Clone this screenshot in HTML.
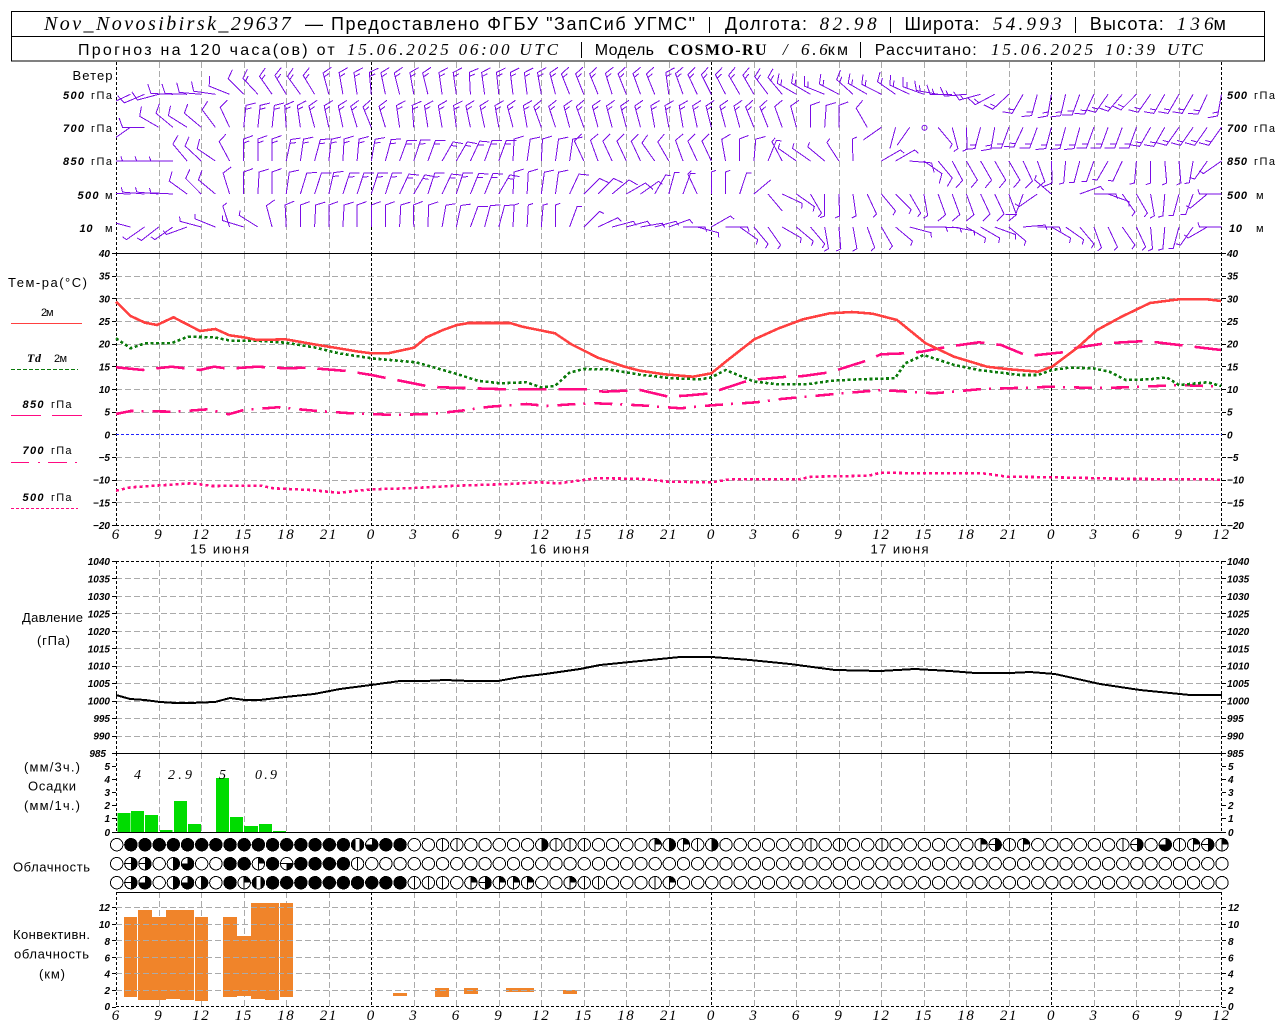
<!DOCTYPE html>
<html lang="ru"><head><meta charset="utf-8"><title>Nov_Novosibirsk_29637</title>
<style>
html,body{margin:0;padding:0;background:#fff}
svg{display:block}
text{fill:#000;font-family:"Liberation Sans",sans-serif}
.s{font-family:"Liberation Serif",serif;font-style:italic}
.h1{font-size:18px}.h2{font-size:16px}
.v1{font-size:19px;font-family:"Liberation Serif",serif;font-style:italic}
.v2{font-size:17px;font-family:"Liberation Serif",serif;font-style:italic}
.l{font-size:13px}
.a{font-size:10px;font-style:italic;font-weight:700}
.w{font-size:11px}
.wi{font-size:11px;font-style:italic;font-weight:700}
.t{font-size:15px;font-family:"Liberation Serif",serif;font-style:italic;text-anchor:middle;letter-spacing:1.5px}
.e{text-anchor:end}
.c{fill:none;stroke-linejoin:round}
</style></head><body>
<svg xmlns="http://www.w3.org/2000/svg" width="1280" height="1024" viewBox="0 0 1280 1024">
<rect width="1280" height="1024" fill="#fff"/>
<defs><clipPath id="cw"><rect x="116" y="62" width="1107" height="191"/></clipPath></defs>

<!-- header -->
<g shape-rendering="crispEdges" fill="none" stroke="#000">
<rect x="11.5" y="11.5" width="1253" height="49.5"/>
<path d="M11.5 36.5H1264.5"/>
<path d="M709.5 17V33M890.5 17V33M1075.5 17V33M581.5 42V58M860.5 42V58"/>
</g>
<text x="44" y="30" class="s" font-size="20" textLength="246.6">Nov_Novosibirsk_29637</text>
<text x="305" y="30" class="h1" textLength="390">— Предоставлено ФГБУ "ЗапСиб УГМС"</text>
<text x="725" y="30" class="h1" textLength="82">Долгота:</text>
<text x="819.6" y="30" class="v1" textLength="57">82.98</text>
<text x="904.5" y="30" class="h1" textLength="75">Широта:</text>
<text x="993" y="30" class="v1" textLength="68.6">54.993</text>
<text x="1089.8" y="30" class="h1" textLength="74">Высота:</text>
<text x="1176.7" y="30" class="v1" textLength="36.8">136</text>
<text x="1213.5" y="30" class="h1" textLength="12.5">м</text>

<text x="78" y="55" class="h2" textLength="256.7">Прогноз на 120 часа(ов) от</text>
<text x="347" y="55" class="v2" textLength="211">15.06.2025 06:00 UTC</text>
<text x="594.7" y="55" class="h2" textLength="59.3">Модель</text>
<text x="667.8" y="55" font-size="16" font-weight="700" style="font-family:'Liberation Serif',serif" textLength="98.7">COSMO-RU</text>
<text x="782.9" y="55" class="v2">/</text>
<text x="801" y="55" class="v2" textLength="26.8">6.6</text>
<text x="827.8" y="55" class="h2" textLength="20.2">км</text>
<text x="874.7" y="55" class="h2" textLength="102">Рассчитано:</text>
<text x="991" y="55" class="v2" textLength="102">15.06.2025</text>
<text x="1105" y="55" class="v2" textLength="50">10:39</text>
<text x="1167" y="55" class="v2" textLength="36">UTC</text>

<!-- grid -->
<g shape-rendering="crispEdges" fill="none">
<path id="gv" stroke="#aaa" stroke-dasharray="6 3"/>
<path id="ax" stroke="#000" stroke-dasharray="3 2"/>
<path id="tk" stroke="#000"/>
<path d="M116 253.5H1222M116 753.5H1222M116 832.5H1222M116 892.5H1222" stroke="#000"/>
<path d="M116 434.5H1222" stroke="#2222ff" stroke-dasharray="3 2"/>
<path id="bk" stroke="#000" stroke-dasharray="3 2"/>
</g>

<!-- wind barbs -->
<g clip-path="url(#cw)"><path id="wb" fill="none" stroke="#7a0ce6" stroke-width="1" shape-rendering="crispEdges"/>
<circle cx="924.5" cy="127.7" r="2.5" fill="none" stroke="#7a0ce6"/></g>

<!-- temp curves -->
<g class="c" shape-rendering="crispEdges">
<polyline class="c" stroke="#ff0a82" stroke-width="2.6" stroke-dasharray="3 3" points="116,490.7 130.6,487.3 191.8,483.3 212,486 261,485.7 273.5,488.3 310,490 338.8,492.7 371.4,489.3 408,488.3 457,485.7 510,484 538.8,482.3 559,483.3 596,478.3 640,478.7 668.6,481.7 711.4,482.3 729.8,479.3 799,479.3 811.4,476.7 868.6,475.7 880.8,472.7 917.6,473.3 982.8,473.3 1007.3,476.7 1052,477.3 1133.9,479 1211,479.3 1221,480"/>
<polyline class="c" stroke="#ff0a82" stroke-width="2.6" stroke-dasharray="18 8 2 9" points="116,414 130.6,411 175.5,411.7 208,409.3 228.6,414.3 243.7,410 277.6,407.3 314,410.7 351,413.3 387.8,414.7 428.6,414.3 461,410.7 490,406.7 526.5,404 547,406 571.4,404.3 596,403.3 640,405.3 680.8,408.3 711.4,405.3 756.3,402.3 780.8,399 831.8,394.3 880.8,390 934,393.3 978.8,389.3 1052,386.7 1093,388 1129.8,387.3 1179,385 1221,386.7"/>
<polyline class="c" stroke="#ff0a82" stroke-width="2.6" stroke-dasharray="28.5 12" points="116,367.3 142.9,370 171.4,366.7 200,370 214,366.7 228.6,368.7 257,366.7 285.7,368.3 306,367.7 347,371 371.4,375 387.8,378.3 426.5,386 440.8,387.3 506,389.3 587.8,389.3 604,391.7 640,390 668.6,396.7 685,395.7 711.4,393.3 721.6,389.3 750,380 787,376.7 803.3,376 829.8,372.3 868.6,360 880.8,354.3 905.3,353.3 921.6,351.7 948,346.7 978.8,342.3 1001,345 1027.8,356 1068.6,351.7 1076.7,347.7 1105.3,343.3 1146,341 1170.6,344 1221,350"/>
<polyline class="c" stroke="#0b7a0b" stroke-width="2.6" stroke-dasharray="3 2.5" points="116,338.3 130.6,348.3 145,343.3 171.4,343.3 187.8,336.7 214,337.3 230.6,340.7 257,340.7 285.7,342.7 314,347.3 338.8,353.3 371.4,358.3 416,362.3 457,374 477.6,380.7 500,383.3 526.5,382.3 540.8,387.3 555,386 569.4,372.7 583.7,369 608,369.3 640,374.7 672.7,378.3 701,379.3 711.4,377.3 725.7,370 754.3,381.7 778.8,384.3 807.3,384.3 831.8,380.7 860.4,379.3 895,378.3 905.3,363.3 923.7,355 954.3,365 978.8,370 1019.6,375 1038,375 1052,370 1068.6,367.7 1093,368.3 1109.4,371.7 1125.7,380 1150,379.3 1166.5,377.3 1179,385 1207.3,382.3 1221,386"/>
<polyline class="c" stroke="#ff4040" stroke-width="2.6" points="116,301.7 130.6,316 145,322.7 157,325 173.5,317.3 200,331 215.5,329 229.4,335.3 243.7,337.3 257,340 285.7,339.3 314,344.3 341,348.7 359,351.7 371.4,353.3 388,353.3 414,347.7 426.5,337.3 443,330 457,325 469,323 510,323 522.4,326.7 555,333.3 571.4,344.3 598,357.7 624.5,366.7 640,370.7 664.5,374.3 693,376.7 711.4,373.3 727.8,360 754.3,339.3 778.8,328.3 803,319.3 829.8,313.3 852,312 872.7,313.7 897,320 925.7,343.3 954,356.7 987,366.7 1009.4,369.3 1038,371.7 1052,366.7 1076.7,348.3 1097,330 1121.6,316.7 1150,303 1179,299.3 1207,299.3 1221,301"/>
<!-- legend lines -->
<path d="M11 323.5H82" stroke="#ff4040"/>
<path d="M11 369.5H78" stroke="#0b7a0b" stroke-dasharray="4 2"/>
<path d="M11 415.5H41M52 415.5H82" stroke="#ff0a82"/>
<path d="M11 462.5H29M38 462.5H40M48 462.5H67M75 462.5H77" stroke="#ff0a82"/>
<path d="M11 508.5H78" stroke="#ff0a82" stroke-dasharray="3 2"/>
<!-- pressure -->
<polyline class="c" stroke="#000" stroke-width="2" points="116,695 130,699 145,700 160,702 175,703 190,703 215,702 230,698 245,700 260,700 285,697 314,694 340,689 371,685 400,681 425,681 445,680 470,681 498,681 520,677 545,674 580,669 600,665 640,661 680,657 712,657 750,660 790,664 835,670 880,671 915,669 950,671 975,673 1010,673 1030,672 1055,674 1100,684 1140,690 1190,695 1222,695"/>
</g>

<!-- precip bars -->
<g fill="#00dc00" shape-rendering="crispEdges">
<rect x="117.3" y="813" width="13" height="19"/><rect x="131" y="811" width="13" height="21"/><rect x="145" y="815" width="13" height="17"/><rect x="160" y="830" width="12.5" height="2"/><rect x="174" y="801" width="13" height="31"/><rect x="188" y="824" width="13" height="8"/><rect x="216" y="778" width="13" height="54"/><rect x="230" y="817" width="13" height="15"/><rect x="244" y="826" width="14" height="6"/><rect x="259" y="824" width="13" height="8"/><rect x="273" y="831" width="13" height="1"/>
</g>

<!-- clouds -->
<g id="cl" shape-rendering="crispEdges"></g>

<!-- convective bars -->
<g fill="#f0842a" shape-rendering="crispEdges">
<rect x="124" y="917" width="13" height="80"/><rect x="138" y="910" width="14" height="90"/><rect x="152" y="917" width="14" height="83"/><rect x="166" y="910" width="14" height="89"/><rect x="180" y="910" width="14" height="90"/><rect x="195" y="917" width="13" height="84"/><rect x="223" y="917" width="14" height="80"/><rect x="237" y="936" width="14" height="60"/><rect x="251" y="903" width="14" height="96"/><rect x="265" y="903" width="14" height="97"/><rect x="280" y="903" width="13" height="94"/><rect x="393" y="993" width="14" height="3"/><rect x="435" y="988" width="14" height="9"/><rect x="464" y="988" width="14" height="6"/><rect x="506" y="988" width="28" height="4"/><rect x="563" y="990" width="14" height="4"/>
</g>
<path id="gh" fill="none" stroke="#aaa" stroke-dasharray="6 3" shape-rendering="crispEdges"/>

<!-- wind labels left -->
<text x="72.5" y="80" class="l" textLength="40">Ветер</text>
<text x="63" y="99" class="wi" textLength="21">500</text><text x="91" y="99" class="w" textLength="21">гПа</text>
<text x="63" y="132" class="wi" textLength="21">700</text><text x="91" y="132" class="w" textLength="21">гПа</text>
<text x="63" y="165" class="wi" textLength="21">850</text><text x="91" y="165" class="w" textLength="21">гПа</text>
<text x="77.5" y="199" class="wi" textLength="21">500</text><text x="105" y="199" class="w">м</text>
<text x="79.5" y="232" class="wi" textLength="13">10</text><text x="105" y="232" class="w">м</text>
<!-- wind labels right -->
<text x="1227" y="99" class="wi" textLength="20">500</text><text x="1254" y="99" class="w" textLength="21">гПа</text>
<text x="1227" y="132" class="wi" textLength="20">700</text><text x="1254" y="132" class="w" textLength="21">гПа</text>
<text x="1227" y="165" class="wi" textLength="20">850</text><text x="1254" y="165" class="w" textLength="21">гПа</text>
<text x="1227" y="199" class="wi" textLength="20">500</text><text x="1256" y="199" class="w">м</text>
<text x="1229" y="232" class="wi" textLength="13">10</text><text x="1256" y="232" class="w">м</text>

<!-- temp legend -->
<text x="8" y="287" class="l" textLength="79">Тем-ра(°С)</text>
<text x="41" y="316" class="w" textLength="12.5">2м</text>
<text x="27" y="362" font-size="12" font-weight="700" style="font-family:'Liberation Serif',serif;font-style:italic" textLength="14">Td</text>
<text x="54" y="362" class="w" textLength="13">2м</text>
<text x="22.5" y="408" class="wi" textLength="21">850</text><text x="51" y="408" class="w" textLength="20.5">гПа</text>
<text x="22.5" y="454" class="wi" textLength="21">700</text><text x="51" y="454" class="w" textLength="20.5">гПа</text>
<text x="22.5" y="501" class="wi" textLength="21">500</text><text x="51" y="501" class="w" textLength="20.5">гПа</text>

<!-- temp axis -->
<g class="a">
<text x="110" y="257" class="a e">40</text><text x="110" y="279.7" class="a e">35</text><text x="110" y="302.3" class="a e">30</text><text x="110" y="325" class="a e">25</text><text x="110" y="347.7" class="a e">20</text><text x="110" y="370.3" class="a e">15</text><text x="110" y="393" class="a e">10</text><text x="110" y="415.7" class="a e">5</text><text x="110" y="438.3" class="a e">0</text><text x="110" y="461" class="a e">−5</text><text x="110" y="483.7" class="a e">−10</text><text x="110" y="506.3" class="a e">−15</text><text x="110" y="529" class="a e">−20</text>
<text x="1227" y="257" class="a">40</text><text x="1227" y="279.7" class="a">35</text><text x="1227" y="302.3" class="a">30</text><text x="1227" y="325" class="a">25</text><text x="1227" y="347.7" class="a">20</text><text x="1227" y="370.3" class="a">15</text><text x="1227" y="393" class="a">10</text><text x="1227" y="415.7" class="a">5</text><text x="1227" y="438.3" class="a">0</text><text x="1227" y="461" class="a">−5</text><text x="1227" y="483.7" class="a">−10</text><text x="1227" y="506.3" class="a">−15</text><text x="1227" y="529" class="a">−20</text>

<!-- pressure axis -->
<text x="110" y="565" class="a e">1040</text><text x="110" y="582.5" class="a e">1035</text><text x="110" y="600" class="a e">1030</text><text x="110" y="617.4" class="a e">1025</text><text x="110" y="634.8" class="a e">1020</text><text x="110" y="652.3" class="a e">1015</text><text x="110" y="669.7" class="a e">1010</text><text x="110" y="687.2" class="a e">1005</text><text x="110" y="704.6" class="a e">1000</text><text x="110" y="722" class="a e">995</text><text x="110" y="739.5" class="a e">990</text><text x="106" y="757" class="a e">985</text>
<text x="1227" y="565" class="a">1040</text><text x="1227" y="582.5" class="a">1035</text><text x="1227" y="600" class="a">1030</text><text x="1227" y="617.4" class="a">1025</text><text x="1227" y="634.8" class="a">1020</text><text x="1227" y="652.3" class="a">1015</text><text x="1227" y="669.7" class="a">1010</text><text x="1227" y="687.2" class="a">1005</text><text x="1227" y="704.6" class="a">1000</text><text x="1227" y="722" class="a">995</text><text x="1227" y="739.5" class="a">990</text><text x="1227" y="757" class="a">985</text>

<!-- precip axis -->
<text x="110" y="770" class="a e">5</text><text x="110" y="783" class="a e">4</text><text x="110" y="796" class="a e">3</text><text x="110" y="809" class="a e">2</text><text x="110" y="822" class="a e">1</text><text x="110" y="836" class="a e">0</text>
<text x="1228" y="770" class="a">5</text><text x="1228" y="783" class="a">4</text><text x="1228" y="796" class="a">3</text><text x="1228" y="809" class="a">2</text><text x="1228" y="822" class="a">1</text><text x="1228" y="836" class="a">0</text>

<!-- conv axis -->
<text x="110" y="911" class="a e">12</text><text x="110" y="928" class="a e">10</text><text x="110" y="945" class="a e">8</text><text x="110" y="961.5" class="a e">6</text><text x="110" y="977.5" class="a e">4</text><text x="110" y="994" class="a e">2</text><text x="110" y="1010" class="a e">0</text>
<text x="1228" y="911" class="a">12</text><text x="1228" y="928" class="a">10</text><text x="1228" y="945" class="a">8</text><text x="1228" y="961.5" class="a">6</text><text x="1228" y="977.5" class="a">4</text><text x="1228" y="994" class="a">2</text><text x="1228" y="1010" class="a">0</text>
</g>

<!-- hours under temp -->
<text x="116.2" y="539" class="t">6</text><text x="158.7" y="539" class="t">9</text><text x="201.2" y="539" class="t">12</text><text x="243.7" y="539" class="t">15</text><text x="286.2" y="539" class="t">18</text><text x="328.8" y="539" class="t">21</text><text x="371.3" y="539" class="t">0</text><text x="413.8" y="539" class="t">3</text><text x="456.3" y="539" class="t">6</text><text x="498.8" y="539" class="t">9</text><text x="541.3" y="539" class="t">12</text><text x="583.8" y="539" class="t">15</text><text x="626.3" y="539" class="t">18</text><text x="668.9" y="539" class="t">21</text><text x="711.4" y="539" class="t">0</text><text x="753.9" y="539" class="t">3</text><text x="796.4" y="539" class="t">6</text><text x="838.9" y="539" class="t">9</text><text x="881.4" y="539" class="t">12</text><text x="923.9" y="539" class="t">15</text><text x="966.4" y="539" class="t">18</text><text x="1008.9" y="539" class="t">21</text><text x="1051.5" y="539" class="t">0</text><text x="1094" y="539" class="t">3</text><text x="1136.5" y="539" class="t">6</text><text x="1179" y="539" class="t">9</text><text x="1221.5" y="539" class="t">12</text>
<text x="190" y="553.5" class="l" textLength="59">15 июня</text>
<text x="530" y="553.5" class="l" textLength="59">16 июня</text>
<text x="870.5" y="553.5" class="l" textLength="58">17 июня</text>

<!-- hours bottom -->
<text x="116.2" y="1020" class="t">6</text><text x="158.7" y="1020" class="t">9</text><text x="201.2" y="1020" class="t">12</text><text x="243.7" y="1020" class="t">15</text><text x="286.2" y="1020" class="t">18</text><text x="328.8" y="1020" class="t">21</text><text x="371.3" y="1020" class="t">0</text><text x="413.8" y="1020" class="t">3</text><text x="456.3" y="1020" class="t">6</text><text x="498.8" y="1020" class="t">9</text><text x="541.3" y="1020" class="t">12</text><text x="583.8" y="1020" class="t">15</text><text x="626.3" y="1020" class="t">18</text><text x="668.9" y="1020" class="t">21</text><text x="711.4" y="1020" class="t">0</text><text x="753.9" y="1020" class="t">3</text><text x="796.4" y="1020" class="t">6</text><text x="838.9" y="1020" class="t">9</text><text x="881.4" y="1020" class="t">12</text><text x="923.9" y="1020" class="t">15</text><text x="966.4" y="1020" class="t">18</text><text x="1008.9" y="1020" class="t">21</text><text x="1051.5" y="1020" class="t">0</text><text x="1094" y="1020" class="t">3</text><text x="1136.5" y="1020" class="t">6</text><text x="1179" y="1020" class="t">9</text><text x="1221.5" y="1020" class="t">12</text>

<!-- side labels -->
<text x="22" y="622" class="l" textLength="61">Давление</text>
<text x="37" y="645" class="l" textLength="33">(гПа)</text>
<text x="24" y="771.5" class="l" textLength="56">(мм/3ч.)</text>
<text x="28" y="790.5" class="l" textLength="48">Осадки</text>
<text x="24" y="810" class="l" textLength="56">(мм/1ч.)</text>
<text x="13" y="871.5" class="l" textLength="77">Облачность</text>
<text x="13" y="939" class="l" textLength="77">Конвективн.</text>
<text x="14" y="958.5" class="l" textLength="75">облачность</text>
<text x="39" y="978.5" class="l" textLength="26">(км)</text>

<text x="134" y="779" class="v2" style="font-size:14px">4</text>
<text x="168" y="779" class="v2" style="font-size:14px" textLength="24">2.9</text>
<text x="219" y="779" class="v2" style="font-size:14px">5</text>
<text x="255" y="779" class="v2" style="font-size:14px" textLength="22">0.9</text>
</svg>
<script>
(function(){
var X=function(k){return 116.2+14.17*k};
var n=null,f=function(v){return v.toFixed(1)};
var rows=[
{y:94.3,fe:[[9,2],[78,3]],a:[n,-115,-113,-105,-88,-88,-85,-82,-68,-45,-43,-35,-31,-36,-31,-15,-10,-8,-5,-12,-14,-10,-14,-8,-8,-3,-8,-6,-7,-7,-10,-15,-22,-22,-22,-18,-22,-20,-22,-8,-20,-25,-27,-27,-30,-30,-37,-40,-60,-60,-68,-62,-48,-60,-63,-55,-65,-70,-80,-90,-95,-105,-118,-133,-150,-165,-170,-167,-160,-155,-145,-140,-135,-145,-150,-150,-150,-155,-170]},
{y:127.3,fe:[[8,2],[46,3],[53,2],[56,0],[60,1],[78,3]],a:[n,-125,-90,-60,-50,-58,-50,-37,-25,6,6,6,-4,-8,-15,-12,-12,-17,-22,-17,-8,-4,-9,-10,-7,-12,-12,-10,-15,-10,-20,-18,-15,-20,-15,-15,-15,-15,-10,-10,-10,-12,-14,-15,-15,-22,-22,-20,-15,0,4,0,n,-30,-125,-165,-145,n,140,165,178,-165,-170,-160,-155,-160,-165,-165,-165,-160,-160,-160,-160,-150,-150,-145,-145,-145,-145]},
{y:161,fe:[[4,1],[8,2],[27,3],[45,2],[55,1],[66,2],[78,1]],a:[n,-90,-90,-90,-90,-40,-47,-56,-28,0,0,0,12,8,15,7,3,5,10,15,20,18,20,30,30,25,20,20,3,8,3,8,8,-25,-20,-25,-25,-25,-35,-30,-20,-25,-25,-10,-1,5,22,-28,-55,-55,-50,-33,-2,n,60,60,95,125,140,152,150,150,150,150,155,160,178,185,-165,-160,-150,-155,-175,180,175,175,-170,-145,-125]},
{y:194,fe:[[4,1],[14,2],[27,3],[36,2],[44,1],[46,0],[57,1],[64,2],[78,1]],a:[n,-88,-85,-85,-87,-54,-45,-50,-17,0,3,0,8,17,18,13,18,18,18,18,25,30,18,25,18,22,22,30,3,3,8,8,25,45,45,50,60,55,30,15,20,-25,0,0,18,50,140,115,125,150,180,178,172,155,140,135,150,170,160,160,160,155,155,160,-160,-125,-50,n,70,90,110,145,150,170,-175,-165,-160,-130,-90]},
{y:227,fe:[[10,1],[27,2],[78,1]],a:[n,-75,-125,-128,-125,-110,-75,-68,-18,-73,-58,-15,-3,0,3,0,3,0,0,0,3,-1,2,10,12,20,15,15,3,3,5,0,20,45,65,75,75,80,75,70,90,105,60,90,125,140,145,120,130,140,170,175,170,160,150,130,105,90,92,100,120,120,110,130,85,90,120,125,140,160,155,145,155,175,-175,-165,-145,-120,-90]}
];
var L=22,d="";
rows.forEach(function(r){
 r.a.forEach(function(a,k){
  if(a===n)return;
  var q=0;for(var i=0;i<r.fe.length;i++){if(k<=r.fe[i][0]){q=r.fe[i][1];break}}
  var x=X(k),y=r.y,t=a*Math.PI/180,ux=Math.sin(t),uy=-Math.cos(t);
  var tx=x+L*ux,ty=y+L*uy;
  d+="M"+f(x)+" "+f(y)+"L"+f(tx)+" "+f(ty);
  var b=(a+70)*Math.PI/180,fx=Math.sin(b),fy=-Math.cos(b);
  if(q==1){d+="l"+f(5*fx)+" "+f(5*fy)}
  if(q>=2){d+="l"+f(10*fx)+" "+f(10*fy)}
  if(q>=3){var bx=tx-4*ux,by=ty-4*uy,m=q==3?6:10;d+="M"+f(bx)+" "+f(by)+"l"+f(m*fx)+" "+f(m*fy)}
 });
});
document.getElementById("wb").setAttribute("d",d);

var gv="",ax="",tk="",bk="",gh="";
var P=[[62,253,1],[253,525,1],[561,753,1],[753,832,0],[892,1006.5,1]];
P.forEach(function(p){
 for(var i=0;i<=26;i++){
  var x=Math.round(X(i*3))+.5,s="M"+x+" "+p[0]+"V"+p[1];
  if(i==0||i==26||(p[2]&&(i==6||i==14||i==22)))ax+=s;else gv+=s;
 }
});
function tick(y){y=Math.round(y)+.5;tk+="M112 "+y+"H116M1222 "+y+"H1226";}
for(var T=40;T>=-20;T-=5){var y=253+(40-T)*4.533;tick(y);
 if(T==40||T==0)continue;
 if(T==-20)bk+="M116 "+(Math.round(y)+.5)+"H1222";else gv+="M116 "+(Math.round(y)+.5)+"H1222";
}
for(var pr=1040;pr>=985;pr-=5){var y2=561+(1040-pr)*3.491;tick(y2);
 if(pr==1040)bk+="M116 561.5H1222";else if(pr>985)gv+="M116 "+(Math.round(y2)+.5)+"H1222";
}
[766,779,792,805,818,832].forEach(tick);
for(var h=12;h>=0;h-=2){var y3=1006.5-8.27*h;tick(y3);
 if(h==0)bk+="M116 1006.5H1222";else gh+="M116 "+(Math.round(y3)+.5)+"H1222";
}
document.getElementById("gv").setAttribute("d",gv);
document.getElementById("ax").setAttribute("d",ax);
document.getElementById("tk").setAttribute("d",tk);
document.getElementById("bk").setAttribute("d",bk);
document.getElementById("gh").setAttribute("d",gh);

var C=["o"+"FFFFFFFFFFFFFFFF"+"BTFF"+"oo"+"vv"+"ooooo"+"h"+"vvv"+"oooo"+"chcvh"+"oooooo"+"vovoov"+"oooooo"+"cHvc"+"oooooo"+"vHoTvcHc",
"oHHohTooFFcFeFFFFv",
"oHTohThoFcB"+"FFFFFFFFFF"+"vvvocHcccoocvvooovc"];
var R=6.2,o="",ys=[844.7,863.7,882.7];
C.forEach(function(s,r){
 while(s.length<79)s+="o";
 for(var k=0;k<79;k++){
  var c=s.charAt(k),x=116.7+14.17*k,y=ys[r];
  var xs=f(x),yy=f(y),top=f(y-R),bot=f(y+R),lf=f(x-R),rt=f(x+R);
  var arc="A"+R+" "+R+" 0 ";
  o+='<circle cx="'+xs+'" cy="'+yy+'" r="'+R+'" fill="'+(c=="F"||c=="B"?"#000":"#fff")+'" stroke="#000"/>';
  var p="",l="";
  if(c=="v")l="M"+xs+" "+top+"V"+bot;
  if(c=="c"){p="M"+xs+" "+yy+"L"+xs+" "+top+arc+"0 1 "+rt+" "+yy+"Z";l="M"+xs+" "+top+"V"+bot}
  if(c=="e"){p="M"+xs+" "+yy+"L"+rt+" "+yy+arc+"0 1 "+xs+" "+bot+"Z";l="M"+lf+" "+yy+"H"+rt}
  if(c=="h"||c=="H"){p="M"+xs+" "+top+arc+"0 1 "+xs+" "+bot+"Z"}
  if(c=="H")l="M"+lf+" "+yy+"H"+xs;
  if(c=="h")l="M"+xs+" "+top+"V"+bot;
  if(c=="T"){p="M"+xs+" "+yy+"L"+xs+" "+top+arc+"1 1 "+lf+" "+yy+"Z"}
  if(p)o+='<path d="'+p+'" fill="#000"/>';
  if(l)o+='<path d="'+l+'" fill="none" stroke="#000"/>';
  if(c=="B")o+='<rect x="'+f(x-2)+'" y="'+f(y-R+.5)+'" width="4" height="'+f(2*R-1)+'" fill="#fff"/>';
 }
});
document.getElementById("cl").innerHTML=o;
})();
</script>
</body></html>
